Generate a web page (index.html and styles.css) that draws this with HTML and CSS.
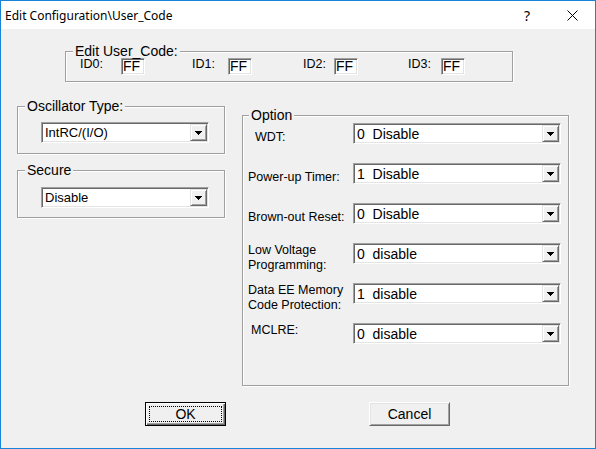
FILE: index.html
```html
<!DOCTYPE html>
<html>
<head>
<meta charset="utf-8">
<link rel="stylesheet" href="styles.css">
</head>
<body>
<div class="window">
  <div class="titlebar">
    <span class="title">Edit Configuration\User_Code</span>
    <span class="cap-btn help">?</span>
    <span class="cap-btn close">
      <svg width="11" height="11" viewBox="0 0 11 11"><path d="M0.5 0.5 L10.5 10.5 M10.5 0.5 L0.5 10.5" stroke="#000" stroke-width="1" fill="none"/></svg>
    </span>
  </div>
  <div class="content">
    <div class="group usercode">
      <span class="legend">Edit User_Code:</span>
      <div class="ids">
        <div class="id"><span class="lbl w41">ID0:</span><span class="edit">FF</span></div>
        <div class="id"><span class="lbl w36">ID1:</span><span class="edit">FF</span></div>
        <div class="id"><span class="lbl w31">ID2:</span><span class="edit">FF</span></div>
        <div class="id"><span class="lbl w33">ID3:</span><span class="edit">FF</span></div>
      </div>
    </div>

    <div class="main">
      <div class="leftcol">
        <div class="group small osc">
          <span class="legend">Oscillator Type:</span>
          <div class="combo narrow">
            <span class="combo-text">IntRC/(I/O)</span>
            <span class="drop"><svg width="7" height="4" viewBox="0 0 7 4" shape-rendering="crispEdges"><path d="M0 0H7V1H6V2H5V3H4V4H3V3H2V2H1V1H0Z" fill="#000"/></svg></span>
          </div>
        </div>
        <div class="group small secure">
          <span class="legend">Secure</span>
          <div class="combo narrow">
            <span class="combo-text">Disable</span>
            <span class="drop"><svg width="7" height="4" viewBox="0 0 7 4" shape-rendering="crispEdges"><path d="M0 0H7V1H6V2H5V3H4V4H3V3H2V2H1V1H0Z" fill="#000"/></svg></span>
          </div>
        </div>
      </div>

      <div class="group option">
        <span class="legend opt-legend">Option</span>
        <div class="opt-grid">
          <div class="opt-label single pl12">WDT:</div>
          <div class="combo wide"><span class="combo-text">0&nbsp; Disable</span><span class="drop"><svg width="7" height="4" viewBox="0 0 7 4" shape-rendering="crispEdges"><path d="M0 0H7V1H6V2H5V3H4V4H3V3H2V2H1V1H0Z" fill="#000"/></svg></span></div>

          <div class="opt-label single pl5">Power-up Timer:</div>
          <div class="combo wide"><span class="combo-text">1&nbsp; Disable</span><span class="drop"><svg width="7" height="4" viewBox="0 0 7 4" shape-rendering="crispEdges"><path d="M0 0H7V1H6V2H5V3H4V4H3V3H2V2H1V1H0Z" fill="#000"/></svg></span></div>

          <div class="opt-label single pl5">Brown-out Reset:</div>
          <div class="combo wide"><span class="combo-text">0&nbsp; Disable</span><span class="drop"><svg width="7" height="4" viewBox="0 0 7 4" shape-rendering="crispEdges"><path d="M0 0H7V1H6V2H5V3H4V4H3V3H2V2H1V1H0Z" fill="#000"/></svg></span></div>

          <div class="opt-label pl5">Low Voltage<br>Programming:</div>
          <div class="combo wide"><span class="combo-text">0&nbsp; disable</span><span class="drop"><svg width="7" height="4" viewBox="0 0 7 4" shape-rendering="crispEdges"><path d="M0 0H7V1H6V2H5V3H4V4H3V3H2V2H1V1H0Z" fill="#000"/></svg></span></div>

          <div class="opt-label pl5">Data EE Memory<br>Code Protection:</div>
          <div class="combo wide"><span class="combo-text">1&nbsp; disable</span><span class="drop"><svg width="7" height="4" viewBox="0 0 7 4" shape-rendering="crispEdges"><path d="M0 0H7V1H6V2H5V3H4V4H3V3H2V2H1V1H0Z" fill="#000"/></svg></span></div>

          <div class="opt-label pl8">MCLRE:</div>
          <div class="combo wide"><span class="combo-text">0&nbsp; disable</span><span class="drop"><svg width="7" height="4" viewBox="0 0 7 4" shape-rendering="crispEdges"><path d="M0 0H7V1H6V2H5V3H4V4H3V3H2V2H1V1H0Z" fill="#000"/></svg></span></div>
        </div>
      </div>
    </div>

    <div class="buttons">
      <div class="btn default"><span class="focus">OK</span></div>
      <div class="btn">Cancel</div>
    </div>
  </div>
</div>
</body>
</html>
```

FILE: styles.css
```css
html, body {
  margin: 0;
  padding: 0;
  background: #f0f0f0;
}

.window {
  width: 596px;
  height: 449px;
  box-sizing: border-box;
  border: 1px solid #1883d7;
  background: #f0f0f0;
  display: flex;
  flex-direction: column;
  font-family: "Liberation Sans", Arial, sans-serif;
  color: #000;
}

/* ---------- title bar ---------- */
.titlebar {
  height: 28px;
  flex: none;
  background: #fff;
  display: flex;
  align-items: stretch;
  font-family: "Noto Sans", "Open Sans", sans-serif;
}

.title {
  flex: 1;
  display: flex;
  align-items: center;
  padding-left: 4px;
  padding-top: 1px;
  font-size: 12px;
  white-space: nowrap;
}

.cap-btn {
  display: flex;
  align-items: center;
  justify-content: center;
  padding-top: 1px;
}

.help {
  width: 46px;
  font-size: 14px;
}

.close {
  width: 45px;
}

/* ---------- content ---------- */
.content {
  flex: 1;
  display: flex;
  flex-direction: column;
}

.group {
  position: relative;
  box-sizing: border-box;
  border: 1px solid #a0a0a0;
  box-shadow: inset 1px 1px 0 #fff, 1px 1px 0 #fff;
}

.legend {
  position: absolute;
  top: -7px;
  left: 7px;
  padding: 0 2px;
  background: #f0f0f0;
  font-size: 14px;
  line-height: 13px;
  white-space: nowrap;
}

.opt-legend {
  left: 6px;
}

/* user code group */
.usercode {
  margin: 22px 0 0 64px;
  width: 448px;
  height: 31px;
  padding: 6px 0 0 14px;
}

.ids {
  display: flex;
}

.id {
  display: flex;
  align-items: flex-start;
}

.id:nth-child(1) { width: 112px; }
.id:nth-child(2) { width: 111px; }
.id:nth-child(3) { width: 105px; }

.lbl {
  font-size: 12.5px;
  line-height: 12px;
}

.w41 { width: 41px; }
.w36 { width: 36px; }
.w31 { width: 31px; }
.w33 { width: 33px; }

.edit {
  box-sizing: border-box;
  width: 24px;
  height: 17px;
  background: #fff;
  border: 1px solid;
  border-color: #a0a0a0 #fff #fff #a0a0a0;
  box-shadow: inset 1px 1px 0 #696969, inset -1px -1px 0 #e3e3e3;
  font-size: 14px;
  line-height: 15px;
  padding-left: 1px;
}

/* main area */
.main {
  display: flex;
  align-items: flex-start;
  margin-top: 24px;
  padding-left: 16px;
  gap: 17px;
}

.leftcol {
  width: 208px;
  display: flex;
  flex-direction: column;
}

.small {
  width: 208px;
  height: 48px;
  padding: 15px 0 0 23px;
}

.secure {
  margin-top: 16px;
  padding-top: 16px;
}

/* combo boxes */
.combo {
  box-sizing: border-box;
  height: 21px;
  display: flex;
  align-items: stretch;
  background: #fff;
  border: 1px solid;
  border-color: #a0a0a0 #fff #fff #a0a0a0;
  box-shadow: inset 1px 1px 0 #696969, inset -1px -1px 0 #e3e3e3;
  padding: 1px;
}

.narrow {
  width: 168px;
}

.wide {
  width: 208px;
}

.combo-text {
  flex: 1;
  display: flex;
  align-items: center;
  padding-left: 2px;
  white-space: nowrap;
}

.narrow .combo-text {
  font-size: 13px;
}

.wide .combo-text {
  font-size: 14px;
}

.drop {
  box-sizing: border-box;
  width: 17px;
  display: flex;
  align-items: center;
  justify-content: center;
  background: #f0f0f0;
  border: 1px solid;
  border-color: #e3e3e3 #696969 #696969 #e3e3e3;
  box-shadow: inset 1px 1px 0 #fff, inset -1px -1px 0 #a0a0a0;
  padding-top: 1px;
}

/* option group */
.option {
  margin-top: 9px;
  width: 327px;
  height: 271px;
  padding-top: 7px;
}

.opt-grid {
  display: grid;
  grid-template-columns: 110px 208px;
  grid-auto-rows: 40px;
}

.opt-label {
  font-size: 12.5px;
  line-height: 15px;
  white-space: nowrap;
}

.opt-label.single {
  padding-top: 7px;
}

.pl5 { padding-left: 5px; }
.pl8 { padding-left: 8px; }
.pl12 { padding-left: 12px; }

/* buttons */
.buttons {
  display: flex;
  margin-top: 16px;
  padding-left: 144px;
  gap: 143px;
}

.btn {
  box-sizing: border-box;
  width: 81px;
  height: 24px;
  display: flex;
  align-items: center;
  justify-content: center;
  font-size: 14px;
  background: #f0f0f0;
  border: 1px solid;
  border-color: #fff #696969 #696969 #fff;
  box-shadow: inset 1px 1px 0 #e3e3e3, inset -1px -1px 0 #a0a0a0;
}

.btn.default {
  border-color: #000;
  box-shadow: inset 1px 1px 0 #fff, inset -1px -1px 0 #696969, inset -2px -2px 0 #a0a0a0;
  padding: 3px;
  align-items: stretch;
}

.focus {
  flex: 1;
  display: flex;
  align-items: center;
  justify-content: center;
  border: 1px dotted #000;
}
```
